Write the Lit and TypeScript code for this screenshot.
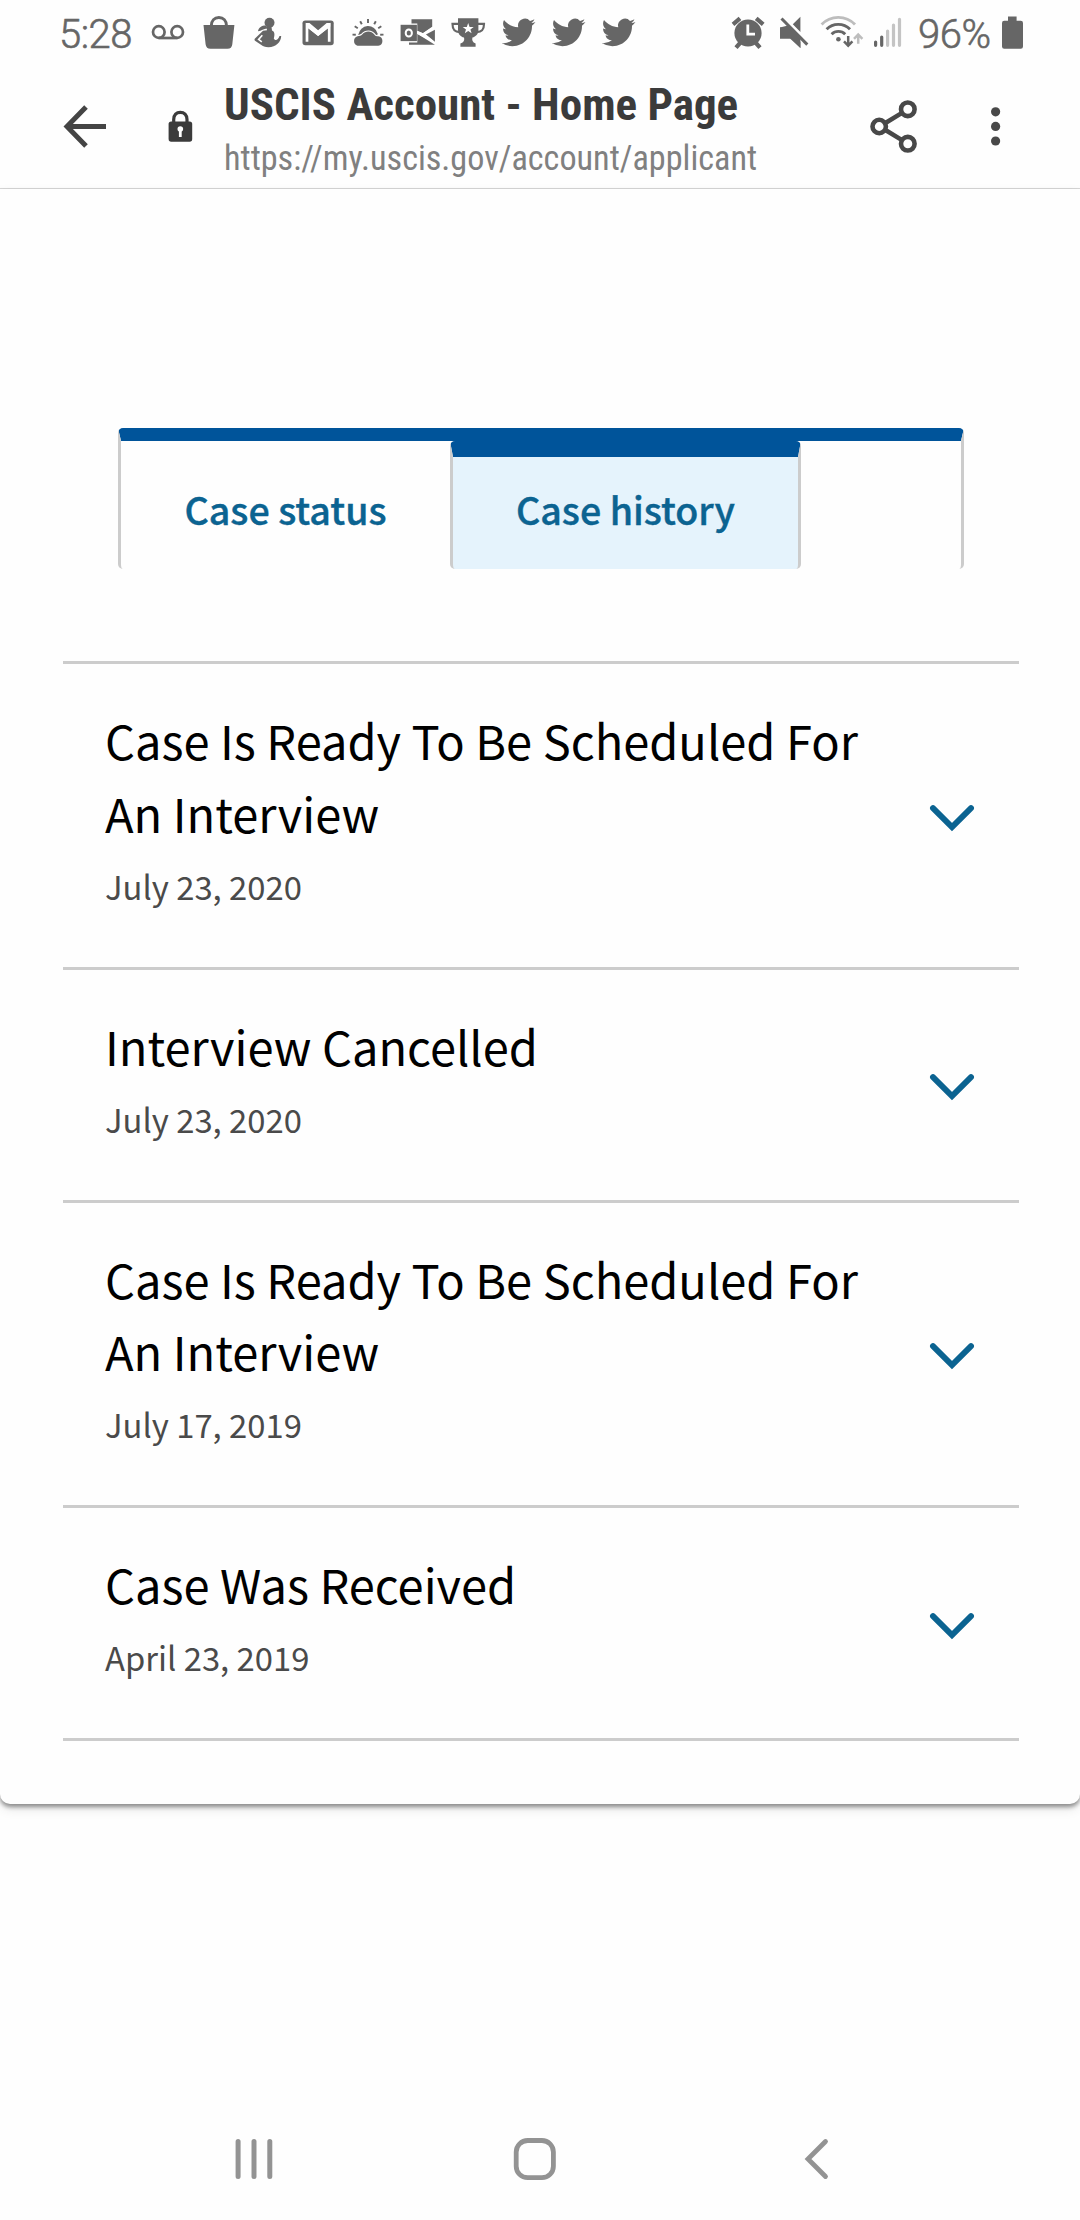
import { LitElement, html, svg, css, TemplateResult, SVGTemplateResult } from "lit";
import { customElement, property } from "lit/decorators.js";

const BIRD =
  "M23.953 4.57a10 10 0 01-2.825.775 4.958 4.958 0 002.163-2.723c-.951.555-2.005.959-3.127 1.184a4.92 4.92 0 00-8.384 4.482C7.69 8.095 4.067 6.13 1.64 3.162a4.822 4.822 0 00-.666 2.475c0 1.71.87 3.213 2.188 4.096a4.904 4.904 0 01-2.228-.616v.06a4.923 4.923 0 003.946 4.827 4.996 4.996 0 01-2.212.085 4.936 4.936 0 004.604 3.417 9.867 9.867 0 01-6.102 2.105c-.39 0-.779-.023-1.17-.067a13.995 13.995 0 007.557 2.209c9.053 0 13.998-7.496 13.998-13.985 0-.21 0-.42-.015-.63A9.935 9.935 0 0024 4.59z";

/* Every icon is drawn in bar coordinates; x and w pick the slice its cell shows. */
const cell = (x: number, w: number, h: number, art: SVGTemplateResult): TemplateResult =>
  html`<svg class="cell" width=${w} height=${h} viewBox="${x} 0 ${w} ${h}">${art}</svg>`;

const voicemail = svg`<g fill="none" stroke="#666" stroke-width="2.7">
  <circle cx="158.8" cy="32" r="5.8"/><circle cx="177.2" cy="32" r="5.8"/><path d="M158.8 38H177.2"/></g>`;

const bag = svg`<path fill="#666" d="M203.5 25H234.4L232.3 44.2Q231.8 48.8 227.5 48.8H210.4Q206.2 48.8 205.6 44.2Z"/>
  <path fill="none" stroke="#666" stroke-width="3" d="M211.3 26C211.3 20.5 214.5 17.5 218.9 17.5S226.5 20.5 226.5 26"/>`;

const person = svg`<circle cx="269.5" cy="22.8" r="5" fill="#666"/>
  <path fill="#666" d="M258 31.2C258.5 27.5 262 25.5 265.5 25.5L268 28.5C264 28 262 30.8 258 31.2Z"/>
  <path fill="#666" d="M266.5 27H271.5L272 30.5C274.5 31.5 275 34 273.8 38.5C275 41 278 40.5 279.5 36H281.2C281 42 276 47.2 268.5 47.2C265 47.2 262.8 46.2 261 44.8L255 40.8Q254 39.8 255 38.6L263 30.8L267 30.2Z"/>
  <path fill="none" stroke="#fff" stroke-width="1.6" d="M262.3 35.2L258.6 39.4L261.8 41.8"/>`;

const mail = svg`<rect x="302.5" y="20.5" width="31.2" height="24.8" rx="2.8" fill="#666"/>
  <path fill="none" stroke="#fff" stroke-width="2.7" d="M307 41.8V25.5L318.1 34.2L329.2 25.5V41.8"/>
  <path fill="#fff" d="M306 23H309.5L318.1 30.2L326.7 23H330.3V26.5L318.1 36L306 26.5Z"/>`;

const weather = svg`<path fill="#666" d="M358.4 34.5A9.8 9.8 0 0 1 377.6 33.5L377 38H359Z"/>
  <path d="M357.5 45.8A5 5 0 0 1 357.5 36.3C359.5 36 361 35.7 362.4 34.2C365.5 30.6 371.5 30.6 374.3 34.5C375.3 36 376.5 36.2 378.3 36.3A4.8 4.8 0 0 1 378.3 45.8Z" fill="#666" stroke="#fff" stroke-width="2.2" paint-order="stroke"/>
  <path stroke="#666" stroke-width="1.9" d="M368 19V23M360.2 21.2L361.8 24.3M375.8 21.2L374.2 24.3M354.7 26.3L357.8 28.3M381.3 26.3L378.2 28.3M352.5 34.6L355.8 34.8M383.5 34.6L380.2 34.8"/>`;

const outlook = svg`<path fill="#666" d="M411.5 19.2H432.2V26.8L422.8 33.2L417.3 31V23.6H411.5ZM434.9 29.8V42.2L425.4 34.7ZM409 42.4H417.3V33.8L434.9 44.8H409Z"/>
  <path fill="#fff" d="M417.3 30.8L423 33.2L434.9 25.6V27.4L425.7 34.2L434.9 41.8V43.2L417.3 34Z"/>
  <rect x="400.6" y="24.8" width="16.3" height="16.3" fill="#666"/>
  <ellipse cx="408.8" cy="33" rx="3.1" ry="3.5" fill="none" stroke="#fff" stroke-width="2"/>`;

const trophy = svg`<path fill="#666" d="M458 18.2H478.4V29.5C478.4 34.5 475.8 36.5 472.4 37.6C471.8 40.5 472.5 42.3 475.6 43.6V46.8H460.4V43.6C464 42.3 464.6 40.5 464 37.6C460.5 36.5 458 34.5 458 29.5Z"/>
  <path fill="none" stroke="#666" stroke-width="2.2" d="M458.4 23.8H452.5C452.5 29 454 32 459.8 32.2M478 23.8H484C484 29 482.5 32 476.7 32.2"/>
  <path fill="#fff" d="M468.2 22.9L469.6 26.9H473.7L470.4 29.4L471.6 33.3L468.2 31L464.8 33.3L466 29.4L462.7 26.9H466.8Z"/>`;

const bird = (x: number) => svg`<g fill="#666" transform="translate(${x} 15.6) scale(1.405)"><path d=${BIRD}/></g>`;

const alarm = svg`<circle cx="748" cy="33" r="13.6" fill="#666"/>
  <path stroke="#666" stroke-width="4.2" d="M733 24.3L740 18.3M763.2 24.3L756.2 18.3M736 47.6L740.5 42.5M760 47.6L755.5 42.5"/>
  <path fill="none" stroke="#fff" stroke-width="2.8" d="M747.8 24.6V34.2H755"/>`;

const mute = svg`<path fill="#666" d="M780 27.5H786L800.4 42V48L791 38.6H780ZM800.4 16.8V32L792.8 24.2Z"/>
  <path fill="#666" d="M780 27.5V38.6H790L800.4 48V37L788 25.5Z"/>
  <path stroke="#666" stroke-width="3" d="M781.5 18.5L807.3 44.6"/>`;

const wifi = svg`<g fill="none" stroke-width="2.9">
  <path stroke="#bdbdbd" d="M821.6 24.6A23 23 0 0 1 855 24.6"/>
  <path stroke="#666" d="M826.6 29.3A16.3 16.3 0 0 1 850 29.3M831.6 34.2A9.5 9.5 0 0 1 845.2 34.2"/>
  <path stroke="#666" stroke-width="2.5" d="M848.2 36V45.5M844 41.3L848.2 45.6L852.4 41.3"/>
  <path stroke="#bdbdbd" stroke-width="2.5" d="M858.2 43.8V34.5M854 38.8L858.2 34.5L862.4 38.8"/></g>
  <circle cx="838.4" cy="39.2" r="2.3" fill="#666"/>`;

const signal = svg`<g stroke-width="3.2" stroke-linecap="round">
  <path stroke="#666" d="M875.6 42V45.3M881.7 37V45.3"/>
  <path stroke="#c4c4c4" d="M887.6 31V45.3M893.5 25V45.3M899.5 19.3V45.3"/></g>`;

const battery = svg`<path fill="#666" d="M1008 16.5H1016.6V20.8H1020.8Q1023 20.8 1023 23V46.6Q1023 48.8 1020.8 48.8H1004.2Q1002 48.8 1002 46.6V23Q1002 20.8 1004.2 20.8H1008Z"/>`;

@customElement("status-bar")
export class StatusBar extends LitElement {
  static styles = css`
    :host { display: flex; height: 68px; color: #666; font: 300 40px/47px Roboto, sans-serif; letter-spacing: -0.5px; -webkit-text-stroke: 0.6px #666; }
    .cell { display: block; flex: none; }
    .time { width: 84px; margin-left: 59px; padding-top: 11px; box-sizing: border-box; }
    .gap { flex: 1; }
    .level { width: 85px; padding: 11px 0 0 8px; box-sizing: border-box; }
    .end { width: 52px; }
    svg { -webkit-text-stroke: 0; }
  `;
  render() {
    return html`
      <span class="time">5:28</span>
      ${[voicemail, bag, person, mail, weather, outlook, trophy, bird(501.7), bird(551.7), bird(601.7)].map(
        (art, i) => cell(143 + i * 50, 50, 68, art),
      )}
      <span class="gap"></span>
      ${cell(725, 47, 68, alarm)}${cell(772, 46, 68, mute)}${cell(818, 47, 68, wifi)}${cell(865, 45, 68, signal)}
      <span class="level">96%</span>
      ${cell(995, 33, 68, battery)}
      <span class="end"></span>
    `;
  }
}

@customElement("browser-bar")
export class BrowserBar extends LitElement {
  static styles = css`
    :host { display: flex; height: 121px; box-sizing: border-box; border-bottom: 1px solid #d9d9d9; font-family: "Roboto Condensed", Roboto, sans-serif; font-stretch: 75%; }
    .cell { display: block; flex: none; }
    .text { flex: 1; padding-top: 11px; white-space: nowrap; }
    .title { font-size: 45px; line-height: 52px; font-weight: 700; color: #3b3b3b; }
    .url { margin-top: 7px; font-size: 34.2px; line-height: 40px; color: #808080; }
  `;
  render() {
    return html`
      ${cell(0, 150, 120, svg`<path fill="none" stroke="#444" stroke-width="5" d="M106 58.5H68M86 39L67 58.5L86 78"/>`)}
      ${cell(150, 74, 120, svg`<rect x="168.6" y="53.5" width="23.6" height="20.2" rx="2.6" fill="#3b3b3b"/>
        <path fill="none" stroke="#3b3b3b" stroke-width="3.2" d="M173.7 55V51.5C173.7 47 176.5 44.3 180.3 44.3S187 47 187 51.5V55"/>
        <circle cx="180.3" cy="61" r="2.8" fill="#fff"/><path stroke="#fff" stroke-width="2.8" d="M180.3 61V69"/>`)}
      <div class="text">
        <div class="title">USCIS Account - Home Page</div>
        <div class="url">https://my.uscis.gov/account/applicant</div>
      </div>
      ${cell(850, 230, 120, svg`<g fill="none" stroke="#484848" stroke-width="4.6">
        <circle cx="879.2" cy="58.5" r="6.7"/><circle cx="907.8" cy="41.3" r="6.8"/><circle cx="907.8" cy="75.7" r="6.8"/>
        <path d="M885 55.2L902 44.9M885 61.8L902 72.1"/></g>
        <g fill="#484848"><circle cx="995.6" cy="43.8" r="4.6"/><circle cx="995.6" cy="58.4" r="4.6"/><circle cx="995.6" cy="73" r="4.6"/></g>`)}
    `;
  }
}

@customElement("case-tabs")
export class CaseTabs extends LitElement {
  static styles = css`
    :host {
      display: flex; box-sizing: border-box; width: 846px; height: 141px; margin-left: 118px;
      border: 3px solid #ccc; border-top: 13px solid #00549a; border-bottom: 0 solid transparent; border-radius: 5px;
      font: 500 37.6px/54px "Noto Sans CJK SC", sans-serif; color: #0b6391; -webkit-text-stroke: 0.4px #0b6391;
    }
    .tab { box-sizing: border-box; height: 128px; padding-top: 41px; text-align: center; white-space: nowrap; }
    .status { width: 329px; }
    .history { width: 351px; padding-top: 25px; background: #e5f3fc; border: 3px solid #ccc; border-top: 16px solid #00549a; border-bottom: 0 solid transparent; border-radius: 5px; }
  `;
  render() {
    return html`<div class="tab status">Case status</div><div class="tab history">Case history</div>`;
  }
}

@customElement("case-event")
export class CaseEvent extends LitElement {
  @property() heading = "";
  @property() date = "";
  static styles = css`
    :host { display: flex; align-items: center; border-bottom: 3px solid #ccc; font-family: "Noto Sans CJK SC", sans-serif; }
    .body { flex: 1; padding: 40px 0 56.9px 42px; }
    .heading { width: 790px; font-size: 47px; line-height: 72.9px; color: #000; }
    .date { margin-top: 11px; font-size: 32.8px; line-height: 49px; color: #4a4a4a; }
    .chevron { display: block; flex: none; margin: 5px 43px 0 0; }
  `;
  render() {
    return html`
      <div class="body"><div class="heading">${this.heading}</div><div class="date">${this.date}</div></div>
      <svg class="chevron" width="48" height="28" viewBox="0 0 48 28">
        <path fill="none" stroke="#0b6391" stroke-width="5.9" stroke-linecap="round" d="M5 4.2L24 23.2L43 4.2"/>
      </svg>`;
  }
}

@customElement("nav-bar")
export class NavBar extends LitElement {
  static styles = css`
    :host { display: flex; height: 126px; }
    .cell { display: block; flex: none; }
  `;
  render() {
    return html`
      ${cell(0, 400, 126, svg`<path stroke="#939393" stroke-width="5" stroke-linecap="round" d="M238.1 47.5V82.5M254 47.5V82.5M269.8 47.5V82.5"/>`)}
      ${cell(400, 300, 126, svg`<rect x="516.2" y="46.5" width="37.2" height="37.2" rx="11.5" fill="none" stroke="#939393" stroke-width="4.8"/>`)}
      ${cell(700, 380, 126, svg`<path fill="none" stroke="#939393" stroke-width="4.8" stroke-linecap="round" d="M825.5 47.5L808 65L825.5 82.5"/>`)}
    `;
  }
}

const EVENTS = [
  { heading: "Case Is Ready To Be Scheduled For An Interview", date: "July 23, 2020" },
  { heading: "Interview Cancelled", date: "July 23, 2020" },
  { heading: "Case Is Ready To Be Scheduled For An Interview", date: "July 17, 2019" },
  { heading: "Case Was Received", date: "April 23, 2019" },
];

@customElement("app-root")
export class AppRoot extends LitElement {
  static styles = css`
    :host { display: flex; flex-direction: column; width: 1080px; height: 2220px; background: #fefefe; overflow: hidden; }
    .card { box-sizing: border-box; height: 1615px; padding-top: 239px; background: #fefefe; border-radius: 0 0 10px 10px; box-shadow: 0 3px 4px rgba(0, 0, 0, 0.4), 0 5px 12px rgba(0, 0, 0, 0.1); }
    .list { margin: 92px 61px 0 63px; border-top: 3px solid #ccc; }
    .space { flex: 1; }
  `;
  render() {
    return html`
      <status-bar></status-bar>
      <browser-bar></browser-bar>
      <section class="card">
        <case-tabs></case-tabs>
        <div class="list">
          ${EVENTS.map((e) => html`<case-event .heading=${e.heading} .date=${e.date}></case-event>`)}
        </div>
      </section>
      <div class="space"></div>
      <nav-bar></nav-bar>
    `;
  }
}
